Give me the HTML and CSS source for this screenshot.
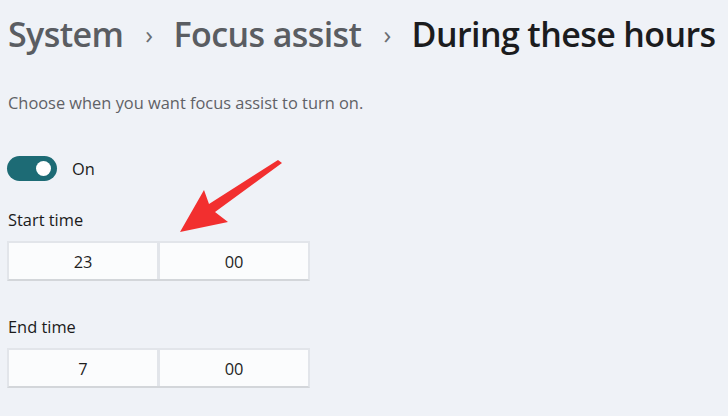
FILE: index.html
```html
<!DOCTYPE html>
<html lang="en">

<head>
  <meta charset="UTF-8">
  <title>During these hours</title>
  <link rel="stylesheet" href="styles.css">
</head>

<body>
  <h1 class="crumbs">
    <span class="crumb">System</span>
    <span class="sep">&#8250;</span>
    <span class="crumb">Focus assist</span>
    <span class="sep">&#8250;</span>
    <span class="crumb current">During these hours</span>
  </h1>

  <p class="intro">Choose when you want focus assist to turn on.</p>

  <div class="toggle-row">
    <span class="toggle"><span class="knob"></span></span>
    <span>On</span>
  </div>

  <div class="field">
    <label>Start time</label>
    <div class="time-box">
      <div class="cell">23</div>
      <div class="cell">00</div>
    </div>
  </div>

  <div class="field">
    <label>End time</label>
    <div class="time-box">
      <div class="cell">7</div>
      <div class="cell">00</div>
    </div>
  </div>

  <!-- annotation arrow -->
  <svg class="arrow" width="728" height="416" viewBox="0 0 728 416">
    <polygon points="278,160 282,163 215,212 228,222 180,232 204,190 209,204" fill="#f22f2f" />
  </svg>
</body>

</html>
```

FILE: styles.css
```css
body {
  font-family: 'Open Sans', 'Noto Sans', sans-serif;
  background-color: #eff2f7;
  color: #1b1b1b;
  margin: 0;
  padding: 0 8px;
  position: relative;
  height: 416px;
  overflow: hidden;
}

.crumbs {
  display: flex;
  align-items: center;
  margin: 0;
  padding-top: 10px;
  height: 48px;
  font-size: 34px;
  font-weight: 600;
  letter-spacing: -0.6px;
  color: #5a5d62;
  white-space: nowrap;
}

.sep {
  font-size: 26px;
  font-weight: 400;
  color: #6b6e72;
  margin: 0 21px 0 22px;
}

.current {
  color: #1b1c1e;
}

.intro {
  margin: 34px 0 0;
  font-size: 16.4px;
  line-height: 22px;
  color: #5f6166;
}

.toggle-row {
  display: flex;
  align-items: center;
  gap: 15px;
  margin-top: 42px;
  height: 25px;
  font-size: 16.4px;
}

.toggle {
  width: 50px;
  height: 25px;
  border-radius: 13px;
  background-color: #1d6b75;
  display: flex;
  align-items: center;
  justify-content: flex-end;
  padding-right: 6px;
  box-sizing: border-box;
  margin-left: -1px;
}

.knob {
  width: 15px;
  height: 15px;
  border-radius: 50%;
  background-color: #fff;
}

.field {
  margin-top: 28px;
}

.field + .field {
  margin-top: 35px;
}

label {
  display: block;
  font-size: 16.4px;
  line-height: 22px;
  margin-bottom: 10px;
}

.time-box {
  display: flex;
  gap: 3px;
  width: 303px;
  height: 40px;
  margin-left: -1px;
  box-sizing: border-box;
  border: 2px solid #e2e5ea;
  border-bottom-color: #d3d6da;
  background-color: #e2e5ea;
}

.cell {
  flex: 1;
  background-color: #fbfcfd;
  display: flex;
  align-items: center;
  justify-content: center;
  font-size: 16.4px;
  color: #1f1f1f;
}

.arrow {
  position: absolute;
  top: 0;
  left: 0;
}
```
